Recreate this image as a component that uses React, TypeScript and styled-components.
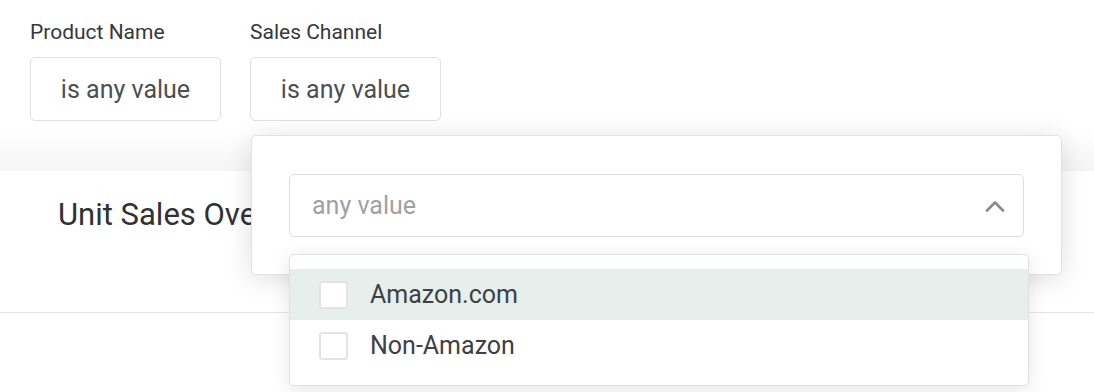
import React from "react";
import styled, { createGlobalStyle } from "styled-components";

const Global = createGlobalStyle`
  html, body { margin: 0; padding: 0; background: #fff; }
  body { font-family: Roboto, "Noto Sans", "Liberation Sans", sans-serif; -webkit-font-smoothing: antialiased; }
  * { box-sizing: border-box; }
`;

const Page = styled.div`
  width: 1094px;
  height: 392px;
  overflow: hidden;
  background: #fff;
`;

const FilterBar = styled.div`
  height: 171px;
  padding: 20px 30px 0;
  background: linear-gradient(to bottom, #ffffff 0px, #ffffff 132px, #f5f5f5 171px);
  position: relative;
  z-index: 2;
`;

const Filters = styled.div`
  display: flex;
  gap: 29px;
`;

const FilterGroup = styled.div`
  position: relative;
  display: flex;
  flex-direction: column;
`;

const Label = styled.div`
  font-size: 21px;
  line-height: 24px;
  color: #35393d;
  margin-bottom: 13px;
`;

const FilterButton = styled.button`
  width: 191px;
  height: 64px;
  border: 1.5px solid #e0e0e0;
  border-radius: 5px;
  background: #fff;
  font-family: inherit;
  font-size: 25px;
  color: #4b5056;
  padding: 0;
  cursor: pointer;
`;

const Popover = styled.div`
  position: absolute;
  top: 115px;
  left: 1px;
  width: 811px;
  height: 140px;
  background: #fff;
  border: 1px solid #e2e2e2;
  border-radius: 5px;
  box-shadow: 0 4px 28px rgba(0, 0, 0, 0.13);
  padding: 38px 37px 0;
`;

const Select = styled.div`
  height: 63px;
  border: 1.5px solid #dedede;
  border-radius: 5px;
  display: flex;
  align-items: center;
  justify-content: space-between;
  padding: 0 18px 0 22px;
  background: #fff;
`;

const Placeholder = styled.span`
  font-size: 25px;
  color: #a0a1a3;
`;

const Menu = styled.div`
  position: absolute;
  top: 118px;
  left: 37px;
  width: 740px;
  background: #fff;
  border: 1px solid #e0e0e0;
  border-radius: 5px;
  box-shadow: 0 4px 20px rgba(0, 0, 0, 0.1);
  padding: 14px 0 14px;
`;

const Option = styled.div<{ $active?: boolean }>`
  height: 51px;
  display: flex;
  align-items: center;
  gap: 22px;
  padding-left: 29px;
  background: ${(p) => (p.$active ? "#e7efed" : "#fff")};
  font-size: 25px;
  color: #3d4146;
`;

const Checkbox = styled.span`
  width: 29px;
  height: 28px;
  border: 2px solid #e3e3e3;
  border-radius: 3px;
  background: #fff;
`;

const Card = styled.div`
  height: 142px;
  border-bottom: 1px solid #e6e6e6;
  padding: 24px 58px 0;
  background: #fff;
  position: relative;
  z-index: 1;
`;

const Title = styled.h2`
  margin: 0;
  font-size: 31px;
  font-weight: 400;
  color: #2f3235;
  line-height: 40px;
`;

const Chevron = () => (
  <svg width="20" height="12" viewBox="0 0 20 12" fill="none">
    <path d="M2 10.5 L10 2.5 L18 10.5" stroke="#8a8a8a" strokeWidth="2.6" strokeLinecap="round" strokeLinejoin="round" />
  </svg>
);

export default function App() {
  return (
    <Page>
      <Global />
      <FilterBar>
        <Filters>
          <FilterGroup>
            <Label>Product Name</Label>
            <FilterButton>is any value</FilterButton>
          </FilterGroup>
          <FilterGroup>
            <Label>Sales Channel</Label>
            <FilterButton>is any value</FilterButton>
            <Popover>
              <Select>
                <Placeholder>any value</Placeholder>
                <Chevron />
              </Select>
              <Menu>
                <Option $active>
                  <Checkbox />
                  Amazon.com
                </Option>
                <Option>
                  <Checkbox />
                  Non-Amazon
                </Option>
              </Menu>
            </Popover>
          </FilterGroup>
        </Filters>
      </FilterBar>
      <Card>
        <Title>Unit Sales Over Time</Title>
      </Card>
    </Page>
  );
}
